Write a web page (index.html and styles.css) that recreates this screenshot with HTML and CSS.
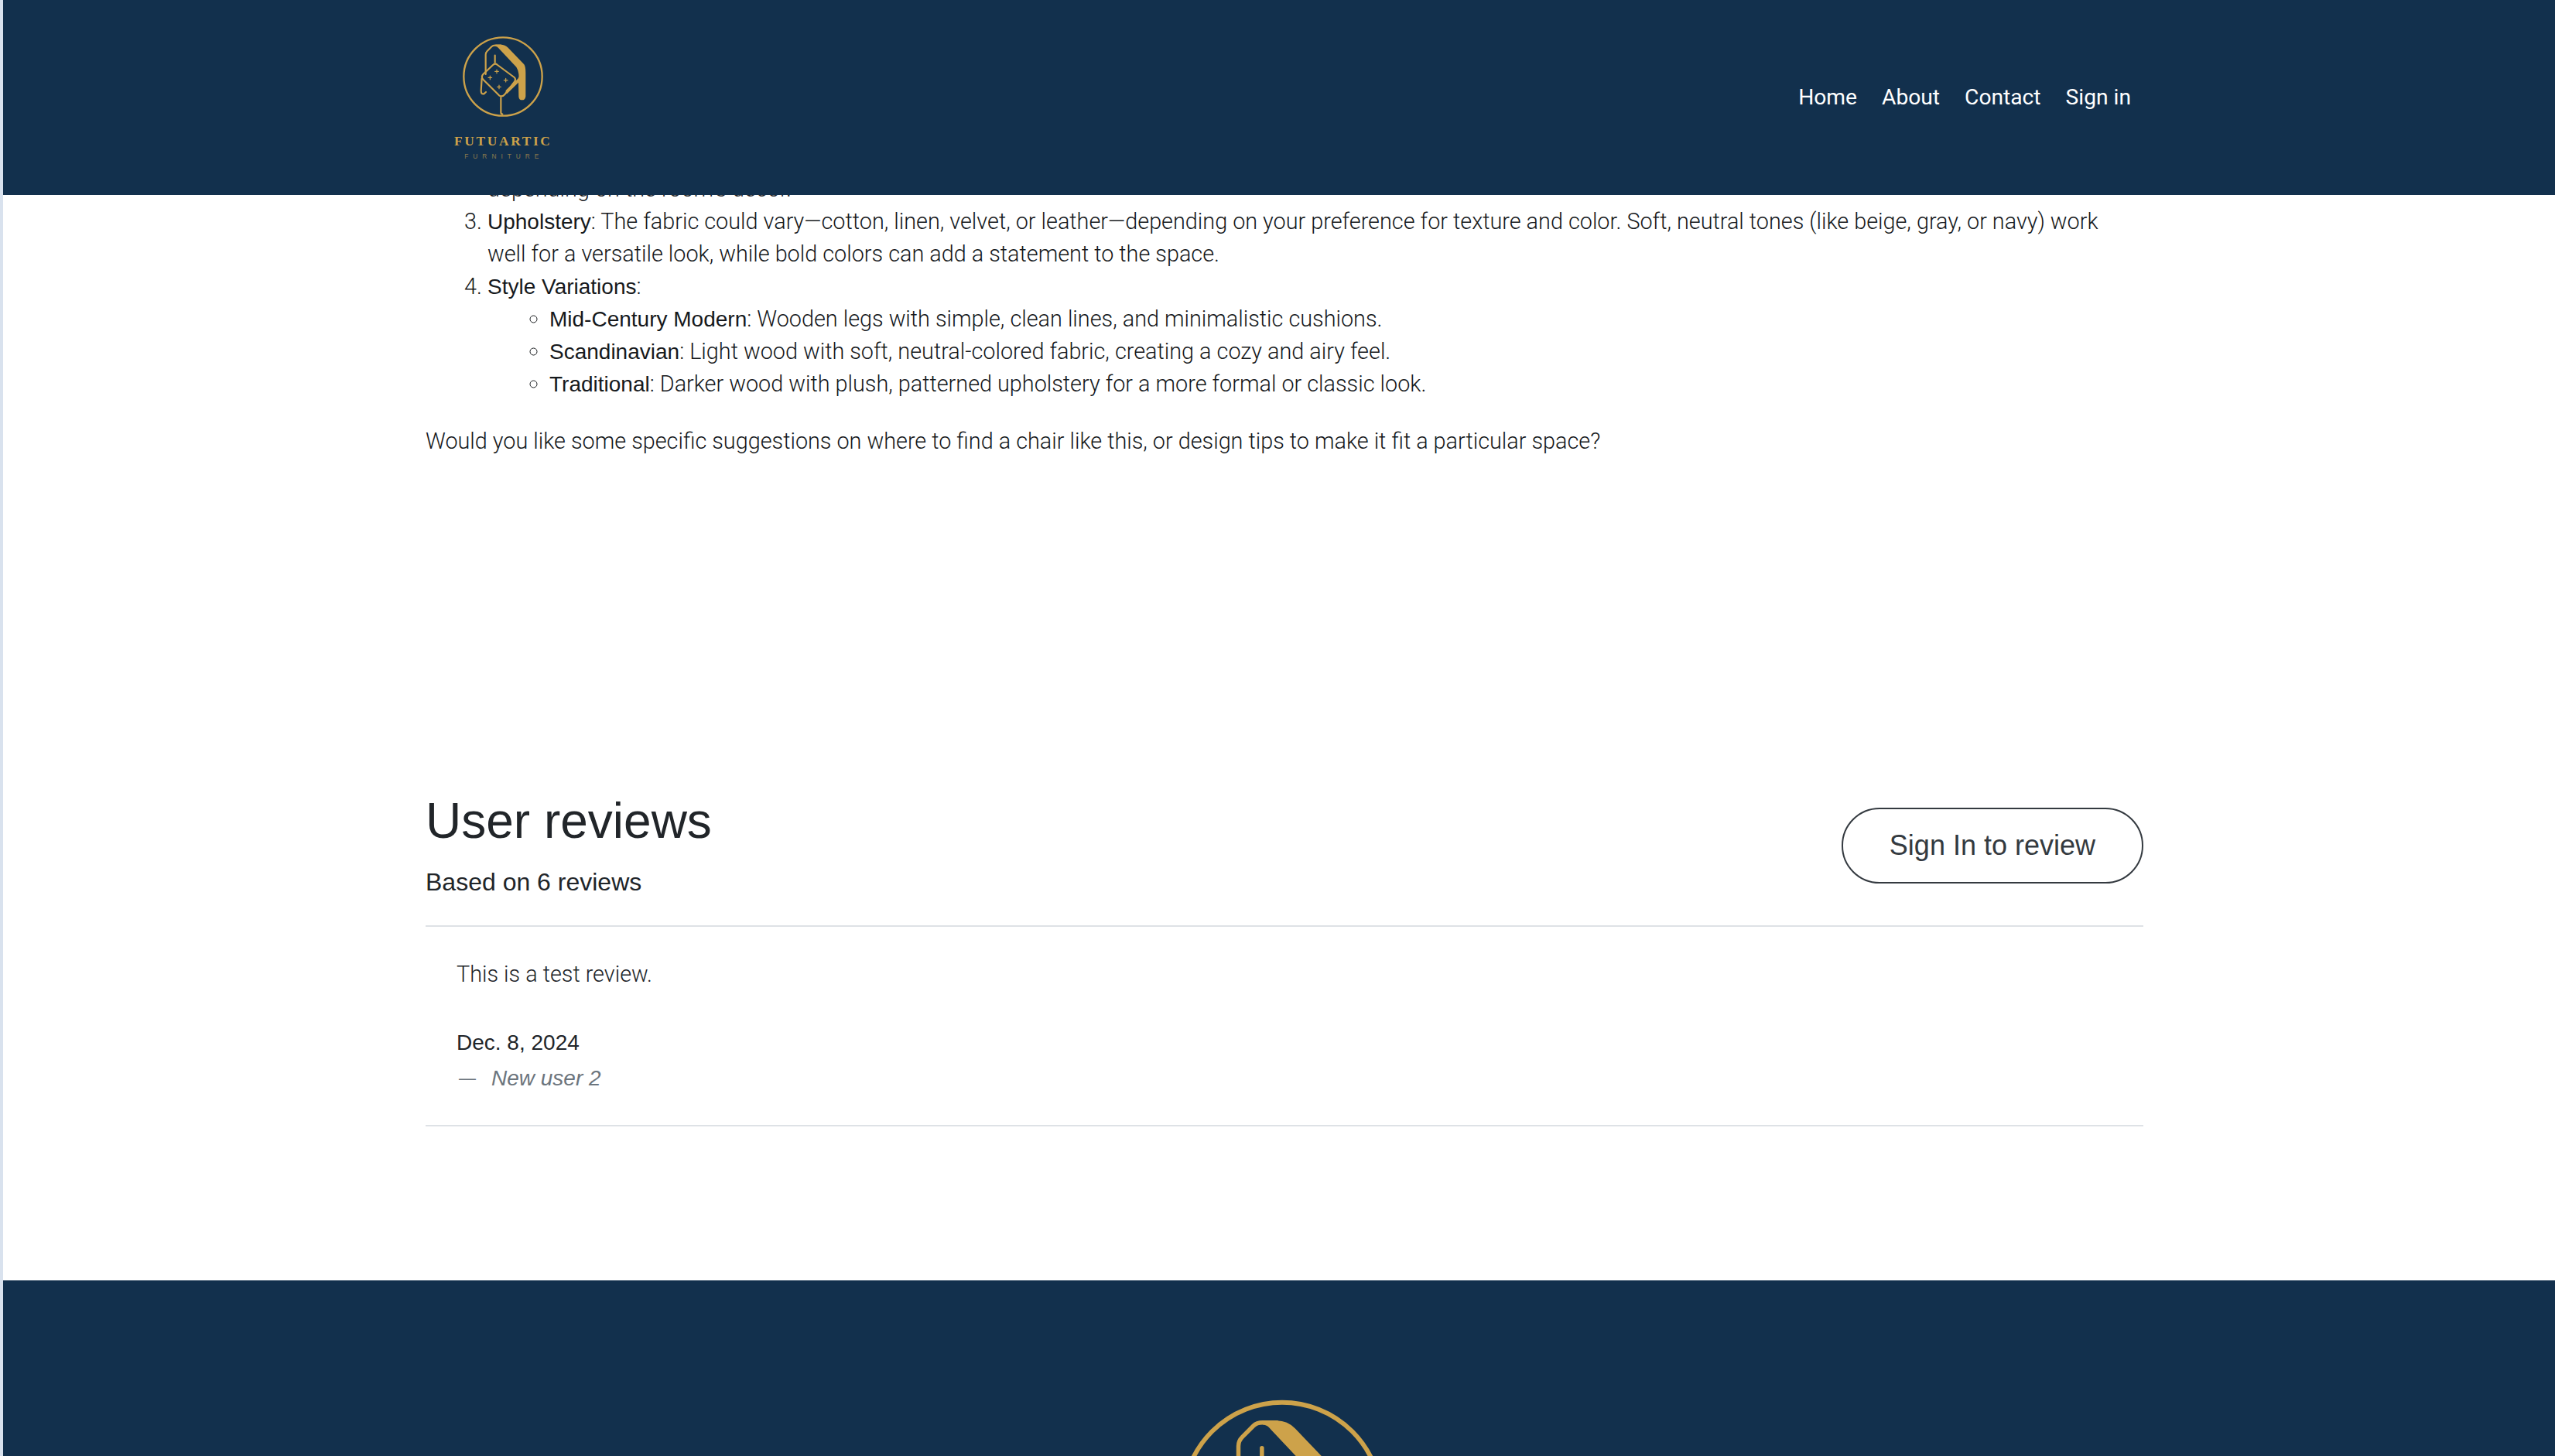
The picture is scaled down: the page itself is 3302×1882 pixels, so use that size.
FILE: index.html
```html
<!DOCTYPE html>
<html lang="en">
<head>
  <meta charset="UTF-8" />
  <title>Futuartic Furniture</title>
  <meta name="viewport" content="width=device-width, initial-scale=1.0" />
  <link rel="stylesheet" href="styles.css">
</head>
<body>
  <svg class="defs" width="0" height="0">
    <defs>
      <g id="logo__mark">
        <circle cx="328" cy="237" r="152" fill="none" stroke="#cda24a" stroke-width="7" />
        <g fill="none" stroke="#cda24a" stroke-width="6.5" stroke-linecap="round" stroke-linejoin="round">
          <path d="M261 228V152Q261 144 267 138L284 121Q289 116 298 116H320" />
          <path d="M297 155V182" />
          <path d="M289 192Q298 183 307 192L372 240Q380 248 372 258L335 306Q325 318 313 310L251 248Q242 238 251 228Z" />
          <path d="M246 245L243 292Q243 306 254 304L262 297" />
          <path d="M320 318V376Q320 382 326 383" />
        </g>
        <path d="M300 113H320Q336 113 348 125L410 190Q416 198 416 222V314Q414 328 402 328Q390 328 389 314L388 260L345 302Q340 306 339 298V290L386 245Q392 238 388 222Q387 212 380 200L311 127Q306 120 298 119Z" fill="#cda24a" />
        <g stroke="#cda24a" stroke-width="3.5" stroke-linecap="round">
          <path d="M304 210V224M297 217H311" />
          <path d="M278 234V248M271 241H285" />
          <path d="M339 244V258M332 251H346" />
          <path d="M313 270V284M306 277H320" />
        </g>
      </g>
    </defs>
  </svg>

  <div class="page">
    <header class="topbar">
      <div class="topbar__inner">
        <svg class="logo" width="200" height="200" viewBox="28 0 600 600">
          <use href="#logo__mark" />
          <text class="logo__name" x="329" y="505" text-anchor="middle">FUTUARTIC</text>
          <text class="logo__sub" x="332" y="555" text-anchor="middle">FURNITURE</text>
        </svg>
        <nav class="nav">
          <a href="#">Home</a>
          <a href="#">About</a>
          <a href="#">Contact</a>
          <a href="#">Sign in</a>
        </nav>
      </div>
    </header>

    <main class="content">
      <p class="answer__cut">depending on the room's decor.</p>
      <ol class="answer" start="3">
        <li><strong>Upholstery</strong>: The fabric could vary—cotton, linen, velvet, or leather—depending on your preference for texture and color. Soft, neutral tones (like beige, gray, or navy) work well for a versatile look, while bold colors can add a statement to the space.</li>
        <li><strong>Style Variations</strong>:
          <ul>
            <li><strong>Mid-Century Modern</strong>: Wooden legs with simple, clean lines, and minimalistic cushions.</li>
            <li><strong>Scandinavian</strong>: Light wood with soft, neutral-colored fabric, creating a cozy and airy feel.</li>
            <li><strong>Traditional</strong>: Darker wood with plush, patterned upholstery for a more formal or classic look.</li>
          </ul>
        </li>
      </ol>
      <p class="answer__end">Would you like some specific suggestions on where to find a chair like this, or design tips to make it fit a particular space?</p>

      <section class="reviews">
        <div class="reviews__head">
          <div>
            <h2>User reviews</h2>
            <p class="reviews__count">Based on 6 reviews</p>
          </div>
          <a class="btn__review" href="#">Sign In to review</a>
        </div>
        <article class="review">
          <p class="review__text">This is a test review.</p>
          <p class="review__date">Dec. 8, 2024</p>
          <p class="review__user"><span class="review__dash">—</span><em>New user 2</em></p>
        </article>
      </section>
    </main>

    <footer class="footer">
      <svg class="footer__logo" width="506" height="506" viewBox="28 0 600 600"><use href="#logo__mark" /></svg>
    </footer>
  </div>
</body>
</html>
```

FILE: styles.css
```css
html, body {
  margin: 0;
  padding: 0;
  height: 1882px;
  overflow: hidden;
}
body {
  font-family: 'Roboto', 'Liberation Sans', sans-serif;
  font-weight: 300;
  font-size: 28.8px;
  line-height: 42px;
  background: #d9e2ee;
  color: #16191c;
}
.defs {
  display: block;
  height: 0;
}
.logo__name {
  font-family: 'Liberation Serif', serif;
  font-weight: 700;
  font-size: 52px;
  letter-spacing: 8px;
  fill: #cda24a;
}
.logo__sub {
  font-family: 'Liberation Sans', sans-serif;
  font-size: 25px;
  letter-spacing: 18px;
  fill: #8f7c4e;
}
.page {
  position: relative;
  margin-left: 4px;
  background: #fff;
  height: 1882px;
  overflow: hidden;
}
.topbar {
  position: absolute;
  top: 0;
  left: 0;
  right: 0;
  height: 252px;
  background: #12304d;
  z-index: 5;
}
.topbar__inner {
  display: flex;
  justify-content: space-between;
  align-items: flex-start;
  width: 2220px;
  margin-left: 546px;
  padding-top: 20px;
}
.nav {
  display: flex;
  gap: 32px;
  margin: 85px 16px 0 0;
  font-size: 28.2px;
  font-weight: 400;
}
.nav a {
  color: #fff;
  text-decoration: none;
}
.content {
  width: 2220px;
  margin-left: 546px;
  padding-top: 223px;
}
.answer__cut {
  margin: 0;
  padding-left: 80px;
}
.answer {
  margin: 0 0 32px;
  padding: 0 20px 0 80px;
}
.answer ul {
  margin: 0;
  padding-left: 80px;
  list-style: circle;
}
strong {
  font-family: 'Liberation Sans', sans-serif;
  font-size: 28px;
  font-weight: 400;
  line-height: 1;
}
.answer__end {
  margin: 0;
}
.reviews {
  margin-top: 430px;
  color: #212529;
}
.reviews__head {
  display: flex;
  justify-content: space-between;
  align-items: center;
  padding-bottom: 33px;
  border-bottom: 2px solid #dee2e6;
}
.reviews h2 {
  font-family: 'Liberation Sans', sans-serif;
  font-weight: 400;
  font-size: 64px;
  line-height: 80px;
  margin: 0 0 16px;
}
.reviews__count {
  font-family: 'Liberation Sans', sans-serif;
  font-weight: 400;
  font-size: 32px;
  line-height: 46px;
  margin: 0;
}
.btn__review {
  font-family: 'Liberation Sans', sans-serif;
  font-weight: 400;
  font-size: 36px;
  line-height: 94px;
  padding: 0 60px;
  margin-top: 2px;
  color: #343a40;
  text-decoration: none;
  border: 2px solid #343a40;
  border-radius: 50px;
}
.review {
  padding: 40px 40px 39px;
  border-bottom: 2px solid #dee2e6;
}
.review p {
  margin: 0;
}
.review .review__date {
  font-family: 'Liberation Sans', sans-serif;
  font-size: 28px;
  font-weight: 400;
  margin-top: 47px;
}
.review .review__user {
  font-family: 'Liberation Sans', sans-serif;
  font-size: 28px;
  font-weight: 400;
  color: #6c757d;
  margin-top: 4px;
}
.review__dash {
  font-size: 22px;
  line-height: 1;
  vertical-align: 2px;
  margin: 0 20px 0 3px;
}
.footer {
  position: absolute;
  left: 0;
  right: 0;
  top: 1655px;
  bottom: 0;
  background: #12304d;
  display: flex;
  justify-content: center;
}
.footer__logo {
  margin: 86px 0 0 8px;
  flex: none;
}
```
